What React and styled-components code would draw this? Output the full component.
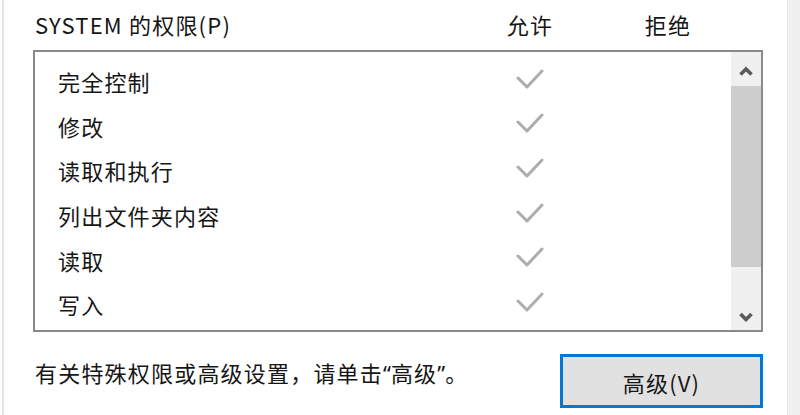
import React from "react";
import styled, { createGlobalStyle } from "styled-components";

const Global = createGlobalStyle`
  html, body { margin: 0; padding: 0; background: #ffffff; }
  body { font-family: "Noto Sans CJK SC", "Noto Sans", sans-serif; color: #161616; }
`;

const Frame = styled.div`
  display: flex;
  width: 800px;
  height: 415px;
  background: #ffffff;
  overflow: hidden;
  letter-spacing: 1.2px;
`;

const LeftEdge = styled.div`
  margin-left: 2px;
  width: 2px;
  background: #e4e4e4;
`;

const RightStrip = styled.div`
  width: 12px;
  background: #f0f0f0;
  border-left: 1px solid #e6e6e6;
`;

const Content = styled.div`
  flex: 1;
  display: flex;
  flex-direction: column;
  padding: 0 24px 0 29px;
`;

const Columns = styled.div`
  display: grid;
  grid-template-columns: 392px 70px 70px;
  column-gap: 68px;
  align-items: center;
`;

const Header = styled(Columns)`
  height: 50px;
  padding-left: 2px;
  font-size: 22px;
  line-height: 30px;
  padding-bottom: 3px;
  box-sizing: border-box;
`;

const HeadCell = styled.span`
  text-align: ${(p) => (p.$center ? "center" : "left")};
  white-space: nowrap;
`;

const ListBox = styled.div`
  display: flex;
  height: 282px;
  box-sizing: border-box;
  border: 2px solid #8a8a8a;
  background: #ffffff;
`;

const Rows = styled.div`
  flex: 1;
  padding-top: 7px;
`;

const Row = styled(Columns)`
  height: 44.6px;
  font-size: 22px;
`;

const Name = styled.span`
  padding-left: 23px;
  white-space: nowrap;
`;

const CheckCell = styled.span`
  display: flex;
  justify-content: center;
  align-items: center;
  margin-top: -5px;
`;

const Scrollbar = styled.div`
  width: 30px;
  display: flex;
  flex-direction: column;
  background: #f0f0f0;
`;

const ArrowButton = styled.div`
  height: ${(p) => p.$h}px;
  display: flex;
  justify-content: center;
  align-items: ${(p) => (p.$down ? "flex-end" : "flex-start")};
  padding: ${(p) => (p.$down ? "0 0 8px" : "14px 0 0")};
  box-sizing: border-box;
`;

const Thumb = styled.div`
  height: 181px;
  background: #cdcdcd;
`;

const Track = styled.div`
  flex: 1;
`;

const Footer = styled.div`
  display: flex;
  justify-content: space-between;
  align-items: flex-start;
  padding-top: 22px;
`;

const Hint = styled.span`
  margin-top: 3px;
  padding-left: 2px;
  font-size: 22px;
  line-height: 30px;
  white-space: nowrap;
`;

const Quote = styled.span`
  font-family: "Noto Sans", sans-serif;
  letter-spacing: 0;
`;

const Button = styled.button`
  width: 203px;
  height: 54px;
  box-sizing: border-box;
  border: 3px solid #0078d7;
  background: #e1e1e1;
  font-family: inherit;
  font-size: 22px;
  letter-spacing: 1.2px;
  color: #161616;
  padding: 0;
  padding-top: 2px;
`;

const Check = () => (
  <svg width="28" height="22" viewBox="0 0 28 22">
    <polyline
      points="2,10 11,19 26,3"
      fill="none"
      stroke="#adadad"
      strokeWidth="3"
      strokeLinecap="round"
      strokeLinejoin="round"
    />
  </svg>
);

const Chevron = ({ down }) => (
  <svg width="16" height="11" viewBox="0 0 16 11">
    <polyline
      points={down ? "2.5,3 8,8.5 13.5,3" : "2.5,8.5 8,3 13.5,8.5"}
      fill="none"
      stroke="#5a5a5a"
      strokeWidth="3.6"
    />
  </svg>
);

const permissions = ["完全控制", "修改", "读取和执行", "列出文件夹内容", "读取", "写入"];

export default function App() {
  return (
    <>
      <Global />
      <Frame>
        <LeftEdge />
        <Content>
          <Header>
            <HeadCell>SYSTEM 的权限(P)</HeadCell>
            <HeadCell $center>允许</HeadCell>
            <HeadCell $center>拒绝</HeadCell>
          </Header>
          <ListBox>
            <Rows>
              {permissions.map((p) => (
                <Row key={p}>
                  <Name>{p}</Name>
                  <CheckCell>
                    <Check />
                  </CheckCell>
                  <span />
                </Row>
              ))}
            </Rows>
            <Scrollbar>
              <ArrowButton $h={34}>
                <Chevron />
              </ArrowButton>
              <Thumb />
              <Track />
              <ArrowButton $h={34} $down>
                <Chevron down />
              </ArrowButton>
            </Scrollbar>
          </ListBox>
          <Footer>
            <Hint>
              有关特殊权限或高级设置，请单击<Quote>“</Quote>高级<Quote>”</Quote>。
            </Hint>
            <Button>高级(V)</Button>
          </Footer>
        </Content>
        <RightStrip />
      </Frame>
    </>
  );
}
